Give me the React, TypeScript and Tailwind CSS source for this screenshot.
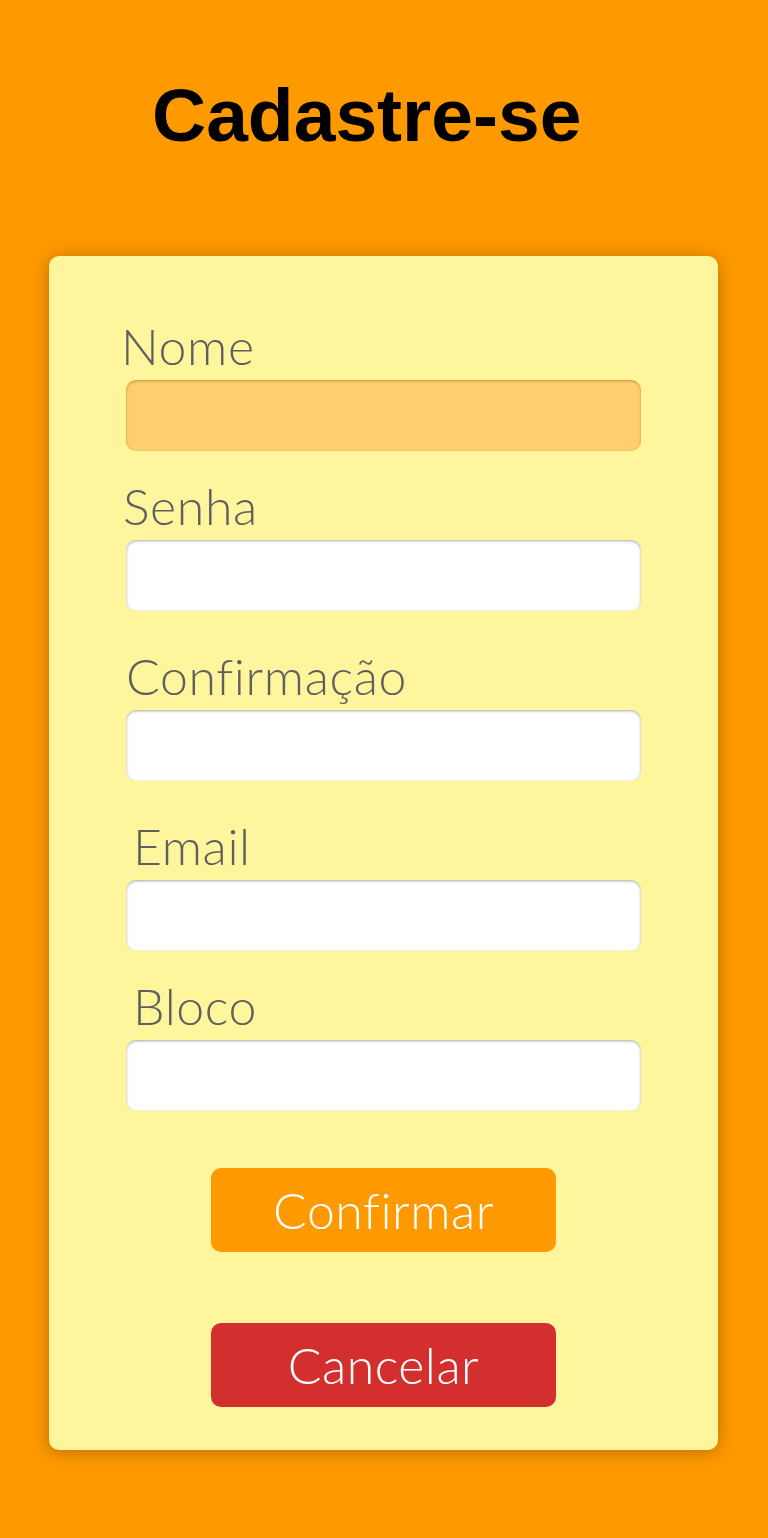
const FIELDS = [
    { label: "Nome", mt: "mt-0", ml: "ml-[72px]", active: true },
    { label: "Senha", mt: "mt-[30px]", ml: "ml-[74px]", active: false },
    { label: "Confirmação", mt: "mt-[40px]", ml: "ml-[77px]", active: false },
    { label: "Email", mt: "mt-[40px]", ml: "ml-[84px]", active: false },
    { label: "Bloco", mt: "mt-[30px]", ml: "ml-[84px]", active: false },
];

export default function App() {
    return (
        <div className="min-h-[1538px] w-full bg-[#ff9900] pt-[77px] pb-[88px]">
            {/* Header */}
            <h1 className="pl-[152px] text-[75px] leading-[76px] font-bold text-black font-['Liberation_Sans',Arial,sans-serif]">
                Cadastre-se
            </h1>

            {/* Form card */}
            <div className="mx-[49px] mt-[103px] flex w-[669px] flex-col rounded-[10px] bg-[#fff59d] pt-[65px] pb-[43px] shadow-[0_2px_18px_rgba(0,0,0,0.28)] font-['Lato',sans-serif] font-light">
                {FIELDS.map((f) => (
                    <div key={f.label} className={`flex flex-col ${f.mt}`}>
                        <label
                            className={`${f.ml} text-[50px] leading-[50px] tracking-[0.6px] text-[#5f5f5f]`}
                        >
                            {f.label}
                        </label>
                        <input
                            className={
                                f.active
                                    ? "ml-[77px] mt-[9px] h-[71px] w-[515px] rounded-[10px] bg-[#ffcf6e] shadow-[inset_0_1px_3px_rgba(120,80,0,0.45)] outline-none"
                                    : "ml-[77px] mt-[9px] h-[71px] w-[515px] rounded-[10px] bg-white shadow-[inset_0_1px_3px_rgba(0,0,0,0.35)] outline-none"
                            }
                        />
                    </div>
                ))}

                {/* Actions */}
                <div className="mt-[57px] flex flex-col items-center">
                    <button className="h-[84px] w-[345px] rounded-[10px] bg-[#ff9900] text-[50px] leading-[50px] tracking-[0.5px] text-white">
                        Confirmar
                    </button>
                    <button className="mt-[71px] h-[84px] w-[345px] rounded-[10px] bg-[#d32f2f] text-[50px] leading-[50px] tracking-[0.5px] text-white">
                        Cancelar
                    </button>
                </div>
            </div>
        </div>
    );
}
